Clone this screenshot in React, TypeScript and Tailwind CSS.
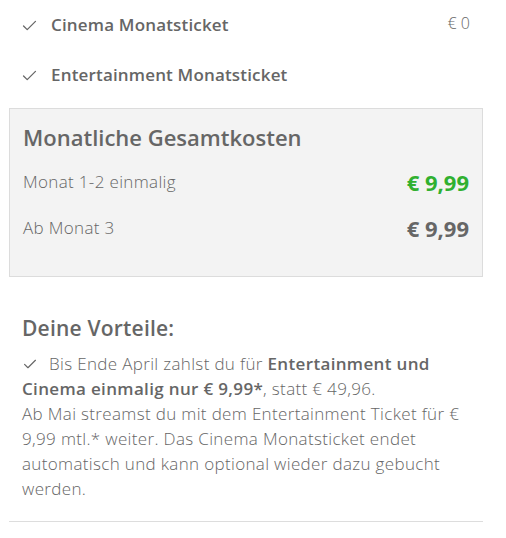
function Check({ className = "" }: { className?: string }) {
  return (
    <svg
      viewBox="0 0 16 12"
      className={className}
      fill="none"
      stroke="#666666"
      strokeWidth="1.4"
      strokeLinecap="round"
      strokeLinejoin="round"
    >
      <path d="M1.5 6.5 L5.5 10.5 L14.5 1.5" />
    </svg>
  );
}

export default function App() {
  return (
    <div
      className="w-[506px] h-[538px] bg-white text-[#666666]"
      style={{ fontFamily: "'Open Sans', Lato, sans-serif" }}
    >
      <div className="w-[474px] ml-[9px]">
        <div className="flex items-center justify-between pl-[13px] pr-[13px] h-[50px]">
          <div className="flex items-center">
            <Check className="w-[15px] h-[11px] mr-[14px]" />
            <span className="text-[17px] font-semibold tracking-[0.01em]">Cinema Monatsticket</span>
          </div>
          <span className="text-[16px] font-light self-start mt-[11px]">€ 0</span>
        </div>
        <div className="flex items-center pl-[13px] h-[50px] mb-[8px]">
          <Check className="w-[15px] h-[11px] mr-[14px]" />
          <span className="text-[17px] font-semibold tracking-[0.01em]">Entertainment Monatsticket</span>
        </div>

        <div className="bg-[#f3f3f3] border border-[#dcdcdc] h-[169px] px-[13px] pt-[14px]">
          <h2 className="text-[22px] font-semibold leading-[28px]">Monatliche Gesamtkosten</h2>
          <div className="flex items-center justify-between mt-[19px] h-[24px]">
            <span className="text-[17px] font-light tracking-[0.02em]">Monat 1-2 einmalig</span>
            <span className="text-[22px] font-bold text-[#30b030]">€ 9,99</span>
          </div>
          <div className="flex items-center justify-between mt-[22px] h-[24px]">
            <span className="text-[17px] font-light tracking-[0.02em]">Ab Monat 3</span>
            <span className="text-[22px] font-bold">€ 9,99</span>
          </div>
        </div>

        <div className="px-[13px] pt-[37px] pb-[20px] border-b border-[#dddddd]">
          <h2 className="text-[21px] font-semibold leading-[28px] tracking-[0.01em]">Deine Vorteile:</h2>
          <p className="text-[17px] font-light leading-[25px] mt-[9px] tracking-[0.02em]">
            <Check className="inline-block w-[14px] h-[10px] mr-[12px] ml-[1px] align-[1px]" />
            Bis Ende April zahlst du für{" "}
            <span className="font-semibold">Entertainment und Cinema einmalig nur € 9,99*</span>, statt € 49,96.
            <br />
            Ab Mai streamst du mit dem Entertainment Ticket für € 9,99 mtl.* weiter. Das Cinema Monatsticket endet
            automatisch und kann optional wieder dazu gebucht werden.
          </p>
        </div>
      </div>
    </div>
  );
}
